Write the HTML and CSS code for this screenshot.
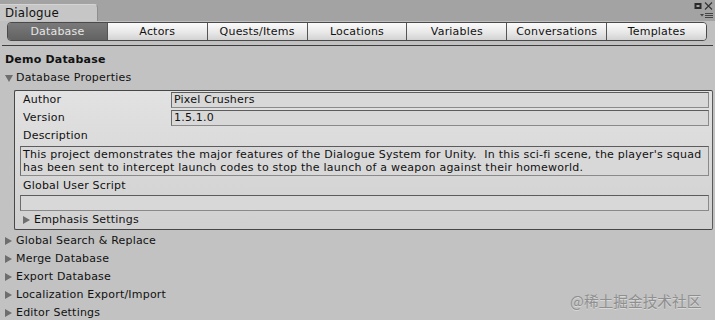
FILE: index.html
```html
<!DOCTYPE html>
<html>
<head>
    <meta charset="UTF-8">
    <title>Dialogue</title>
    <link rel="stylesheet" href="styles.css">
</head>
<body>
<header class="titlebar">
    <div class="wintab">Dialogue</div>
    <div class="winicons">
        <svg width="20" height="20" viewBox="0 0 20 20">
            <rect x="1.5" y="4" width="5" height="4" fill="none" stroke="#2a2a2a" stroke-width="2"/>
            <path d="M11 2.5 L18 9.5 M18 2.5 L11 9.5" stroke="#333" stroke-width="1.1"/>
            <path d="M6 14 L10 14 L8 16.5 Z" fill="#444"/>
            <path d="M11 13.5 H19 M11 15.5 H19 M11 17.5 H19" stroke="#444" stroke-width="1"/>
        </svg>
    </div>
</header>

<nav class="toolbar">
    <div class="tabs">
        <span class="tab active">Database</span>
        <span class="tab">Actors</span>
        <span class="tab">Quests/Items</span>
        <span class="tab">Locations</span>
        <span class="tab">Variables</span>
        <span class="tab">Conversations</span>
        <span class="tab">Templates</span>
    </div>
</nav>
<div class="rule"></div>

<main class="content">
    <h1 class="dbname">Demo Database</h1>
    <div class="fold open">Database Properties</div>

    <section class="panel">
        <div class="row">
            <span class="label">Author</span>
            <span class="field">Pixel Crushers</span>
        </div>
        <div class="row">
            <span class="label">Version</span>
            <span class="field">1.5.1.0</span>
        </div>
        <div class="label solo">Description</div>
        <div class="area">This project demonstrates the major features of the Dialogue System for Unity.&nbsp; In this sci-fi scene, the player's squad<br>has been sent to intercept launch codes to stop the launch of a weapon against their homeworld.</div>
        <div class="label solo">Global User Script</div>
        <div class="field wide"></div>
        <div class="fold sub">Emphasis Settings</div>
    </section>

    <div class="fold">Global Search &amp; Replace</div>
    <div class="fold">Merge Database</div>
    <div class="fold">Export Database</div>
    <div class="fold">Localization Export/Import</div>
    <div class="fold">Editor Settings</div>
</main>

<div class="watermark">@稀土掘金技术社区</div>
</body>
</html>
```

FILE: styles.css
```css
body {
    margin: 0;
    width: 715px;
    height: 320px;
    overflow: hidden;
    background: #c2c2c2;
    font-family: "DejaVu Sans", Verdana, sans-serif;
    font-size: 11px;
    letter-spacing: 0.2px;
    color: #111;
    position: relative;
}

.titlebar {
    height: 21px;
    background: #a3a3a3;
    display: flex;
    align-items: flex-end;
    justify-content: space-between;
}

.wintab {
    width: 92px;
    height: 16px;
    line-height: 17px;
    padding-left: 5px;
    background: #c6c6c6;
    border-top: 1px solid #d4d4d4;
    border-right: 1px solid #8e8e8e;
    border-top-right-radius: 4px;
    font-size: 11.8px;
    color: #111;
}

.winicons {
    align-self: flex-start;
    margin-right: 1px;
    height: 21px;
}

.toolbar {
    height: 21px;
    padding: 1px 8px 0 7px;
    background: #c0c0c0;
}

.tabs {
    display: flex;
    height: 19px;
    border: 1px solid #4a4a4a;
    border-radius: 4px;
    overflow: hidden;
    box-sizing: border-box;
    width: 700px;
}

.tab {
    flex: 1;
    text-align: center;
    line-height: 17px;
    background: linear-gradient(#fbfbfb, #e6e6e6 60%, #d2d2d2);
    border-left: 1px solid #555;
    color: #111;
}

.tab:first-child {
    border-left: none;
}

.tab.active {
    background: linear-gradient(#7a7a7a, #626262);
    color: #e6e6e6;
}

.rule {
    height: 1px;
    margin: 2px 2px 0 2px;
    background: #3e3e3e;
}

.content {
    padding: 5px 2px 0 5px;
}

.dbname {
    margin: 0;
    font-size: 11px;
    line-height: 18px;
    font-weight: bold;
}

.fold {
    line-height: 18px;
    padding-left: 11px;
    position: relative;
}

.fold::before {
    content: "";
    position: absolute;
    left: 0;
    top: 5px;
    border-left: 7px solid #6e6e6e;
    border-top: 4px solid transparent;
    border-bottom: 4px solid transparent;
}

.fold.open::before {
    top: 6px;
    border-top: 7px solid #6e6e6e;
    border-left: 4px solid transparent;
    border-right: 4px solid transparent;
    border-bottom: none;
}

.panel {
    margin: 3px 0 2px 9px;
    padding: 0 3px 0 5px;
    border: 1px solid #474747;
    border-right-color: #5a5a5a;
    border-radius: 2px;
    background: linear-gradient(#e2e2e2, #d0d0d0);
}

.row {
    display: flex;
    height: 18px;
    align-items: center;
}

.label {
    padding-left: 3px;
    line-height: 18px;
}

.row .label {
    width: 148px;
}

.label.solo {
    line-height: 17px;
}

.field {
    flex: 1;
    height: 14px;
    line-height: 14px;
    padding-left: 2px;
    background: #d8d8d8;
    border: 1px solid #8a8a8a;
    border-top-color: #5c5c5c;
    border-left-color: #6c6c6c;
}

.field.wide {
    display: block;
    margin-top: 1px;
}

.area {
    margin: 2px 0 1px 0;
    height: 27px;
    padding: 1px 0 0 2px;
    line-height: 13px;
    font-size: 11px;
    letter-spacing: 0.24px;
    background: #d8d8d8;
    border: 1px solid #8a8a8a;
    border-top-color: #5c5c5c;
    border-left-color: #6c6c6c;
    white-space: nowrap;
}

.fold.sub {
    margin-left: 3px;
    padding-left: 11px;
    line-height: 18px;
}

.watermark {
    position: absolute;
    left: 570px;
    top: 290px;
    font-family: "Noto Sans CJK SC", sans-serif;
    font-size: 14.7px;
    letter-spacing: 0;
    color: #8f8f8f;
    text-shadow: 0 1px 0 #d8d8d8;
}
```
